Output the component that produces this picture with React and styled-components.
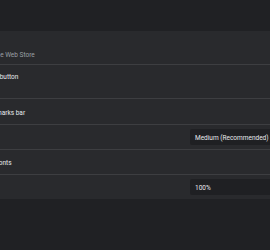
import React from 'react'
import styled, { createGlobalStyle } from 'styled-components'

const Global = createGlobalStyle`
  html, body {
    margin: 0;
    padding: 0;
    overflow: hidden;
    background: #202124;
  }
  body {
    font-family: Roboto, "Liberation Sans", sans-serif;
  }
`

const Page = styled.div`
  width: 270px;
  height: 250px;
  overflow: hidden;
  background: #202124;
  padding-top: 31px;
  box-sizing: border-box;
`

const Card = styled.section`
  background: #292a2d;
  margin: 0 -100px 0 -44px;
`

const Row = styled.div`
  display: flex;
  align-items: center;
  box-sizing: content-box;
  height: ${p => p.$h}px;
  padding: 0 20px 0 8px;
  border-top: ${p => (p.$first ? 'none' : '1px solid #3d3e41')};
`

const Label = styled.div`
  flex: 1;
  display: flex;
  flex-direction: column;
  gap: 5px;
  padding-top: 3px;
  white-space: nowrap;
`

const Primary = styled.span`
  font-size: 6.5px;
  line-height: 7px;
  color: #e8eaed;
`

const Secondary = styled.span`
  font-size: 6.5px;
  line-height: 7px;
  color: #9aa0a6;
`

const Select = styled.div`
  width: 160px;
  height: 16px;
  box-sizing: border-box;
  display: flex;
  align-items: center;
  padding: 1px 0 0 5px;
  border-radius: 2px;
  background: #1f2023;
  color: #e8eaed;
  font-size: 6.5px;
  white-space: nowrap;
`

export default function App() {
  return (
    <>
      <Global />
      <Page>
        <Card>
          <Row $h={33} $first>
            <Label>
              <Primary>Theme</Primary>
              <Secondary>Open Chrome Web Store</Secondary>
            </Label>
          </Row>
          <Row $h={33}>
            <Label>
              <Primary>Show home button</Primary>
              <Secondary>Disabled</Secondary>
            </Label>
          </Row>
          <Row $h={25}>
            <Label>
              <Primary>Show bookmarks bar</Primary>
            </Label>
          </Row>
          <Row $h={24}>
            <Label>
              <Primary>Font size</Primary>
            </Label>
            <Select>Medium (Recommended)</Select>
          </Row>
          <Row $h={24}>
            <Label>
              <Primary>Customize fonts</Primary>
            </Label>
          </Row>
          <Row $h={24}>
            <Label>
              <Primary>Page zoom</Primary>
            </Label>
            <Select>100%</Select>
          </Row>
        </Card>
      </Page>
    </>
  )
}
